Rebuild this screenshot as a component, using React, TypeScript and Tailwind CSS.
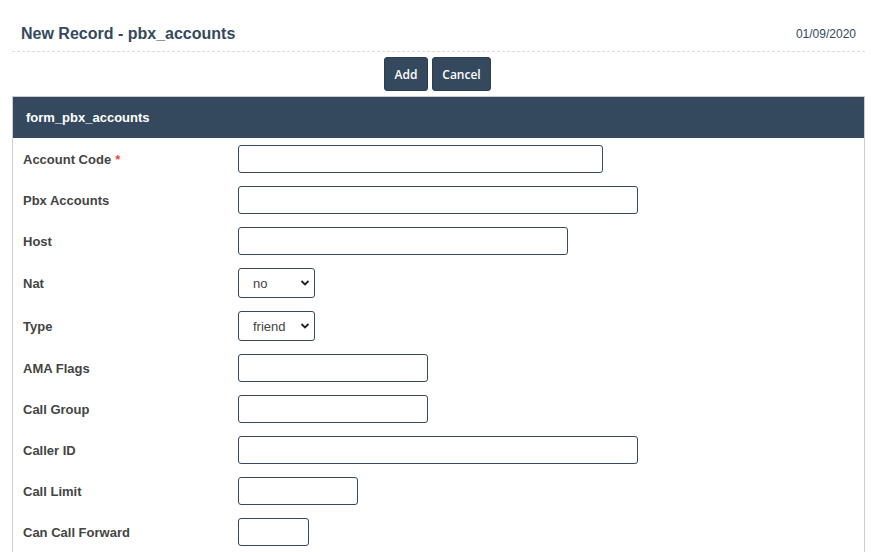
import React from 'react'

type Field = {
  label: string
  kind: 'input' | 'select'
  width: string
  required?: boolean
  value?: string
}

// Field list as shown in the form
const FIELDS: Field[] = [
  { label: 'Account Code', kind: 'input', width: 'w-[365px]', required: true },
  { label: 'Pbx Accounts', kind: 'input', width: 'w-[400px]' },
  { label: 'Host', kind: 'input', width: 'w-[330px]' },
  { label: 'Nat', kind: 'select', width: 'w-[77px]', value: 'no' },
  { label: 'Type', kind: 'select', width: 'w-[77px]', value: 'friend' },
  { label: 'AMA Flags', kind: 'input', width: 'w-[190px]' },
  { label: 'Call Group', kind: 'input', width: 'w-[190px]' },
  { label: 'Caller ID', kind: 'input', width: 'w-[400px]' },
  { label: 'Call Limit', kind: 'input', width: 'w-[120px]' },
  { label: 'Can Call Forward', kind: 'input', width: 'w-[71px]' },
]

function SelectBox({ value, width }: { value: string; width: string }) {
  return (
    <div className={`relative h-[30px] ${width}`}>
      <select
        defaultValue={value}
        className="h-full w-full appearance-none rounded-[3px] border border-[#34495e] bg-white pl-[14px] pt-[1px] text-[13px] text-[#444] outline-none"
        style={{ fontFamily: '"Liberation Sans", Arial, sans-serif' }}
      >
        <option>{value}</option>
      </select>
      <svg
        className="pointer-events-none absolute right-[5px] top-[11px]"
        width="10"
        height="8"
        viewBox="0 0 10 8"
      >
        <path d="M1.5 2 L5 5.5 L8.5 2" fill="none" stroke="#222" strokeWidth="1.8" />
      </svg>
    </div>
  )
}

export default function App() {
  return (
    <div
      className="min-h-[552px] bg-white pl-[12px] pr-[6px]"
      style={{ fontFamily: '"Liberation Sans", Arial, sans-serif' }}
    >
      {/* Page title */}
      <div className="flex h-[52px] items-center justify-between border-b border-dashed border-[#dcdcdc] px-[9px] pt-[17px]">
        <h1 className="text-[16px] font-bold text-[#34495e]">New Record - pbx_accounts</h1>
        <span className="text-[12px] text-[#34495e]">01/09/2020</span>
      </div>

      {/* Actions */}
      <div
        className="mt-[5px] flex justify-center gap-[4px] pr-[2px]"
        style={{ fontFamily: '"Open Sans", sans-serif' }}
      >
        <button className="h-[34px] w-[44px] rounded-[3px] border border-[#2c3e50] bg-[#34495e] pt-[1px] text-[12px] font-semibold text-white">
          Add
        </button>
        <button className="h-[34px] w-[59px] rounded-[3px] border border-[#2c3e50] bg-[#34495e] pt-[1px] text-[12px] font-semibold text-white">
          Cancel
        </button>
      </div>

      {/* Form panel */}
      <div className="mt-[5px] border border-[#cccccc]">
        <div className="flex h-[41px] items-center bg-[#34495e] px-[13px]">
          <span className="text-[13px] font-bold text-white">form_pbx_accounts</span>
        </div>
        <div className="flex flex-col gap-[13px] pb-[13px] pt-[7px]">
          {FIELDS.map((f) => (
            <div key={f.label} className="flex items-center">
              <label className="w-[225px] pl-[10px] pt-[2px] text-[13px] font-bold text-[#444]">
                {f.label}
                {f.required && <span className="ml-[4px] text-[#e74c3c]">*</span>}
              </label>
              {f.kind === 'input' ? (
                <input
                  type="text"
                  className={`h-[28px] ${f.width} rounded-[3px] border border-[#34495e] bg-white px-[6px] text-[13px] outline-none`}
                />
              ) : (
                <SelectBox value={f.value ?? ''} width={f.width} />
              )}
            </div>
          ))}
        </div>
      </div>
    </div>
  )
}
